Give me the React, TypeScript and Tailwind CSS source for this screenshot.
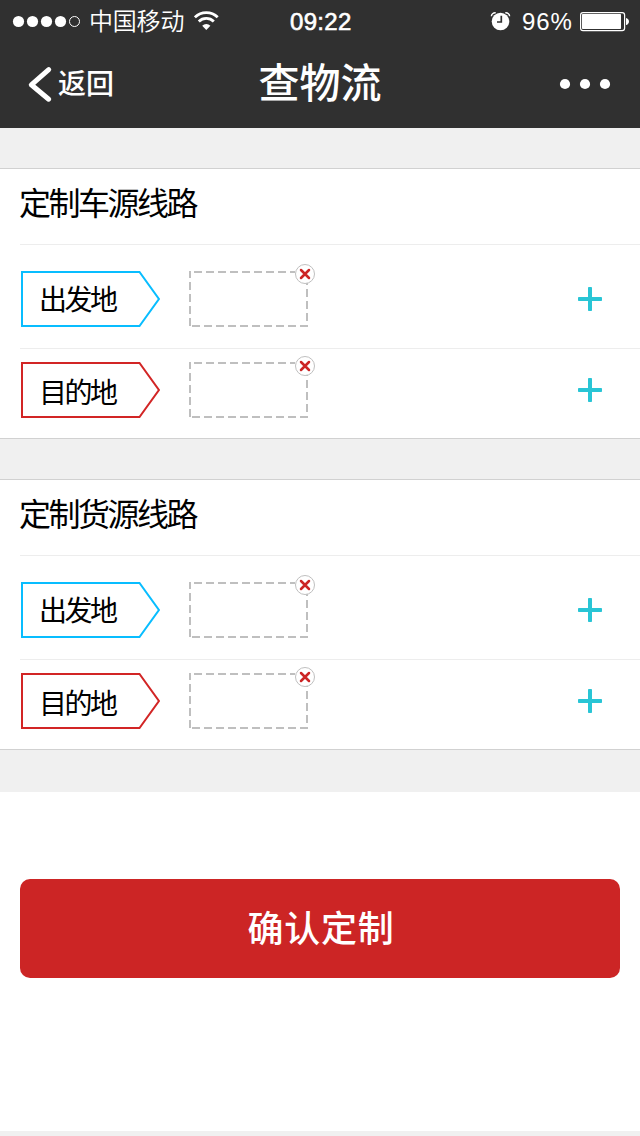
function StatusBar() {
  return (
    <div className="flex h-10 items-center text-white">
      <svg className="ml-[12px] h-10 w-[70px] shrink-0" viewBox="0 0 70 40" fill="#fff">
        <circle cx="6.5" cy="21.5" r="5.6" />
        <circle cx="20.5" cy="21.5" r="5.6" />
        <circle cx="34.5" cy="21.5" r="5.6" />
        <circle cx="48.5" cy="21.5" r="5.6" />
        <circle cx="62.5" cy="21.5" r="5" fill="none" stroke="#fff" />
      </svg>
      <span className="ml-[7px] w-[98px] shrink-0 text-[24px] leading-[40px] font-[350] tracking-[-0.2px] whitespace-nowrap">中国移动</span>
      <svg className="ml-[7px] h-10 w-[26px] shrink-0" viewBox="0 0 26 40" fill="none" stroke="#fff" strokeWidth="2.8">
        <path d="M.9 17.3a16.2 16.2 0 0 1 22.8 0" />
        <path d="M4.8 21.4a10.7 10.7 0 0 1 15 0" />
        <path d="M12.3 30 8.2 25.7a5.8 5.8 0 0 1 8.2 0Z" fill="#fff" stroke="none" />
      </svg>
      <span className="ml-[70px] w-[64px] shrink-0 pt-[4px] font-['Liberation_Sans',sans-serif] text-[24px] leading-[36px] tracking-[0.3px] [-webkit-text-stroke:0.6px_white]">09:22</span>
      <svg className="ml-[136px] h-10 w-[22px] shrink-0" viewBox="0 0 22 40" fill="none" stroke="#fff">
        <circle cx="10.5" cy="21.5" r="8.8" fill="#fff" stroke="none" />
        <path d="M1.4 16.2c0-2 1.7-3.6 4.3-3.4M19.6 16.2c0-2-1.7-3.6-4.3-3.4" strokeWidth="1.4" />
        <path d="M11.3 15.7v6.3H7" stroke="#303030" strokeWidth="1.7" />
      </svg>
      <span className="ml-[10px] w-[56px] shrink-0 pt-[4px] font-['Liberation_Sans',sans-serif] text-[24px] leading-[36px] tracking-[0.9px]">96%</span>
      <svg className="ml-[2px] h-10 w-[50px] shrink-0" viewBox="0 0 50 40" fill="#fff">
        <rect x=".6" y="12.6" width="44" height="18" rx="2.4" fill="none" stroke="#fff" strokeWidth="1.2" />
        <rect x="2" y="14" width="39" height="15" rx=".7" />
        <path d="M46 18c1.7.3 3 1.7 3 3.5s-1.3 3.3-3 3.6Z" />
      </svg>
    </div>
  );
}

function NavBar() {
  return (
    <div className="grid h-[88px] grid-cols-[220px_200px_220px] items-center text-white">
      <div className="flex items-center">
        <svg className="ml-[26px] h-[40px] w-[28px]" viewBox="0 0 28 40" fill="none" stroke="#fff" strokeWidth="5" strokeLinecap="round" strokeLinejoin="round">
          <path d="M22.7 5.7 5.3 20.8 22.7 35.2" />
        </svg>
        <span className="ml-[4px] pb-[4px] text-[28px] leading-[40px] font-medium">返回</span>
      </div>
      <h1 className="pb-[9px] text-center text-[41px] leading-[60px] font-medium whitespace-nowrap">查物流</h1>
      <svg className="mr-[29px] h-5 w-[52px] justify-self-end" viewBox="0 0 52 20" fill="#fff">
        <circle cx="6" cy="10" r="5.1" />
        <circle cx="26" cy="10" r="5.1" />
        <circle cx="46" cy="10" r="5.1" />
      </svg>
    </div>
  );
}

function RouteRow({ label, stroke, textClass, badgeY }: { label: string; stroke: string; textClass: string; badgeY: number }) {
  return (
    <div className="flex h-14 items-center">
      <div className="grid h-14 w-[140px] shrink-0">
        <svg className="col-start-1 row-start-1 h-14 w-[140px]" viewBox="0 0 140 56" fill="none" stroke={stroke} strokeWidth="2">
          <path d="M2 1H119.5L138.9 28 119.5 55H2Z" />
        </svg>
        <span className={`col-start-1 row-start-1 pl-[19px] text-[28px] tracking-[-2.5px] whitespace-nowrap ${textClass}`}>{label}</span>
      </div>
      <svg className="ml-[29px] h-14 w-[126px] shrink-0 overflow-visible" viewBox="0 0 126 56" fill="none" stroke="#bfbfbf" strokeWidth="2">
        <path d="M5 1H106" strokeDasharray="8 4" />
        <path d="M1 0V56" strokeDasharray="8 4" strokeDashoffset="1" />
        <path d="M3 55H119" strokeDasharray="8 4" />
        <path d="M118 6V51" strokeDasharray="8 4" />
        <g transform={`translate(116 ${badgeY})`}>
          <circle r="9.5" fill="#fff" strokeWidth="1" />
          <path d="M-4-4 4 4M4-4-4 4" stroke="#cc2525" strokeWidth="2.5" strokeLinecap="round" />
        </g>
      </svg>
      <svg className="mr-[38px] ml-auto h-6 w-6" viewBox="0 0 24 24" fill="#29c5d5">
        <rect x="0" y="10" width="24" height="4" rx=".8" />
        <rect x="10" y="0" width="4" height="24" rx=".8" />
      </svg>
    </div>
  );
}

function RouteSection({ title }: { title: string }) {
  return (
    <section className="h-[271px] border-y border-[#d1d1d1] bg-white pl-5 text-black">
      <h2 className="-ml-px h-[76px] text-[32px] leading-[64px] tracking-[-2.5px] whitespace-nowrap">{title}</h2>
      <div className="-mt-px h-[105px] border-y border-[#ededed] pt-[26px]">
        <RouteRow label="出发地" stroke="#08bdff" textClass="leading-[54px]" badgeY={3} />
      </div>
      <div className="pt-[13px]">
        <RouteRow label="目的地" stroke="#d22525" textClass="leading-[58px]" badgeY={4} />
      </div>
    </section>
  );
}

export default function App() {
  return (
    <div className="flex h-[1136px] w-[640px] flex-col overflow-hidden bg-[#f0f0f0] font-['Noto_Sans_CJK_SC',sans-serif]">
      <header className="h-32 shrink-0 bg-[#303030]">
        <StatusBar />
        <NavBar />
      </header>
      <main className="flex flex-col gap-10 pt-10">
        <RouteSection title="定制车源线路" />
        <RouteSection title="定制货源线路" />
      </main>
      <div className="mt-[42px] h-[339px] shrink-0 bg-white px-5 pt-[87px]">
        <button className="h-[99px] w-full rounded-[10px] bg-[#cc2525] pb-[4px] pl-[2px] text-[36px] leading-[95px] font-medium tracking-[0.7px] text-white">确认定制</button>
      </div>
    </div>
  );
}
